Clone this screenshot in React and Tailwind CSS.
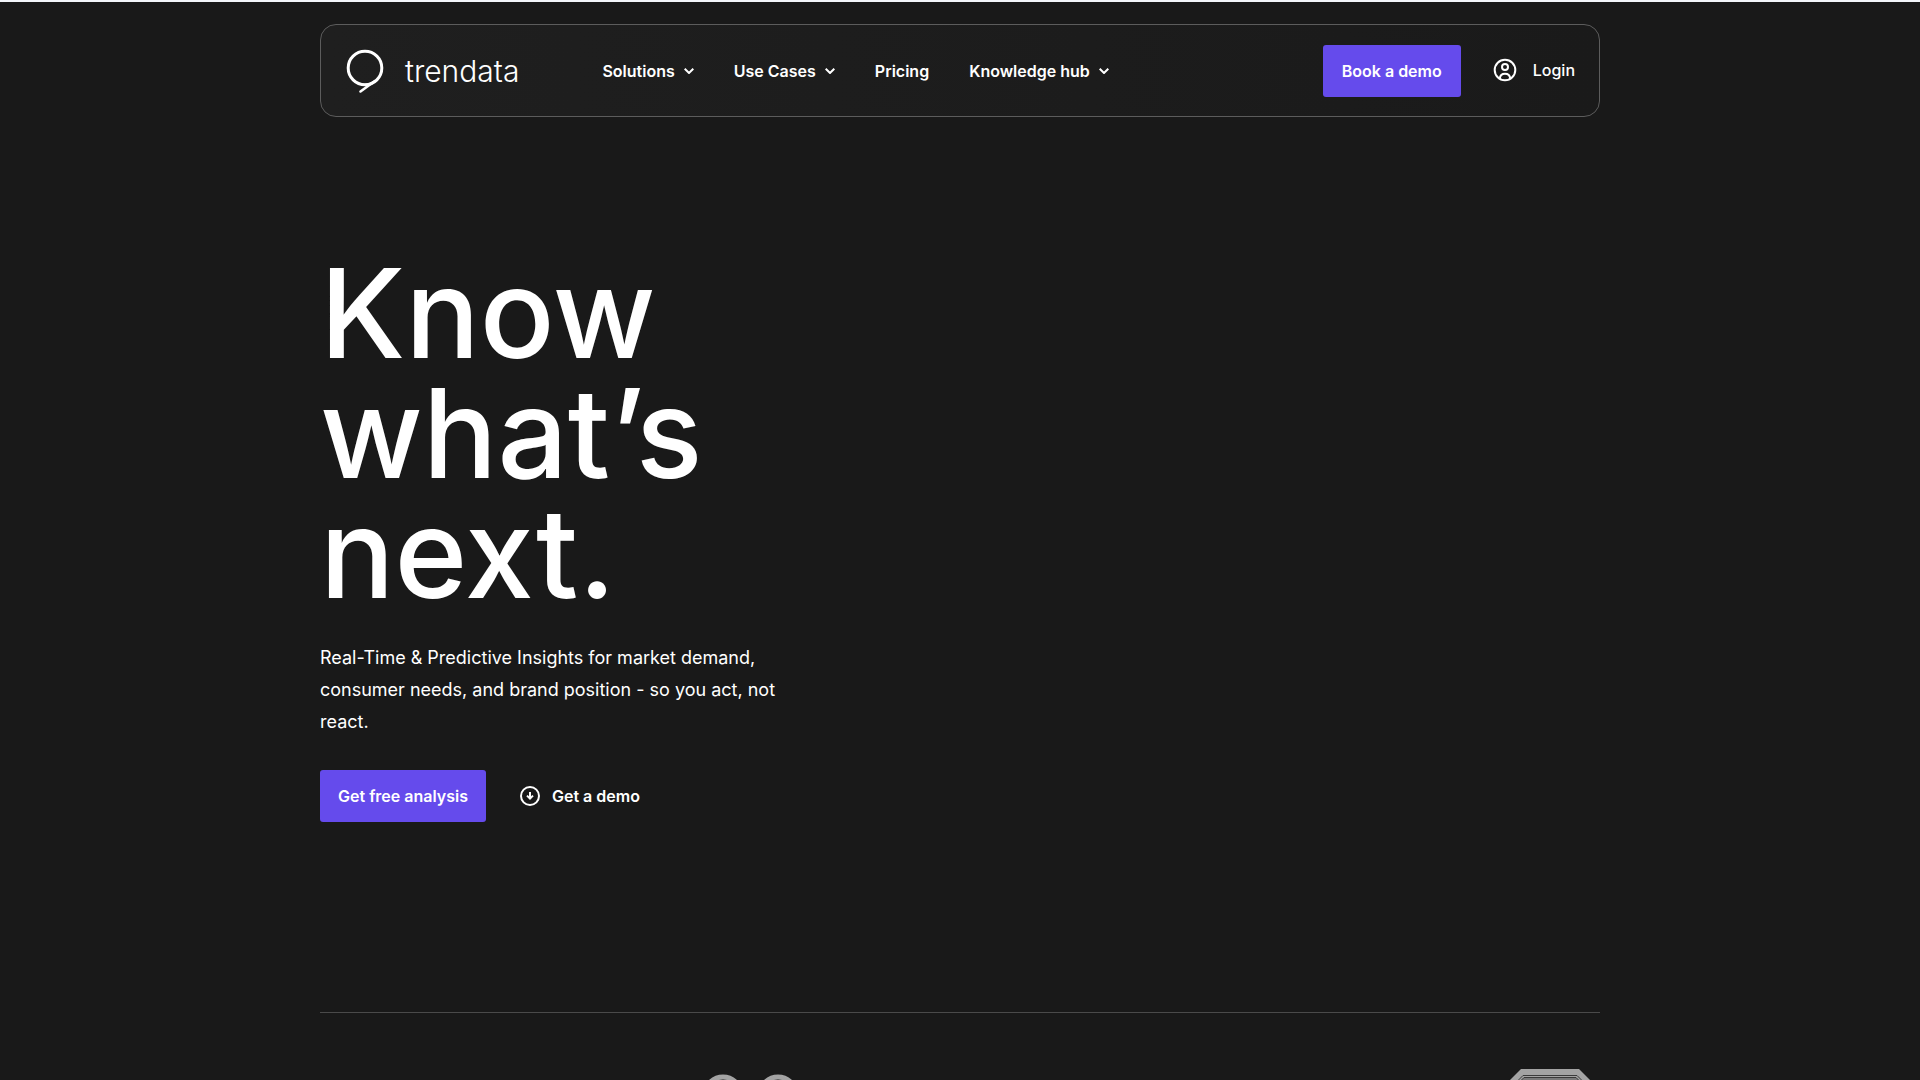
import React from 'react';

const menu = [
  { label: 'Solutions', dropdown: true },
  { label: 'Use Cases', dropdown: true },
  { label: 'Pricing', dropdown: false },
  { label: 'Knowledge hub', dropdown: true },
];

function Logo() {
  return (
    <a href="#home" className="flex items-center gap-5">
      <svg width="40" height="46" viewBox="0 0 40 46" fill="none" stroke="currentColor" strokeLinecap="round" strokeLinejoin="round">
        <circle cx="20" cy="20" r="16.8" strokeWidth="3" />
        <path d="M29.5 33.2 L15.5 43.5" strokeWidth="2.6" />
        <path d="M18 36.8 L24.5 36.6" strokeWidth="2" />
      </svg>
      <span className="text-3xl leading-8 font-light">trendata</span>
    </a>
  );
}

function Chevron() {
  return (
    <svg width="10" height="6" viewBox="0 0 10 6" fill="none" stroke="currentColor" strokeWidth="2">
      <path d="M0.7 0.7 L5 5 L9.3 0.7" />
    </svg>
  );
}

function UserIcon() {
  return (
    <svg width="24" height="24" viewBox="0 0 24 24" fill="none" stroke="currentColor" strokeWidth="2">
      <circle cx="12" cy="12" r="10.3" />
      <circle cx="12" cy="9" r="3" />
      <path d="M6.8 20.6 C7 17.6 9 15.8 12 15.8 C15 15.8 17 17.6 17.2 20.6" />
    </svg>
  );
}

function DownCircle() {
  return (
    <svg width="20" height="20" viewBox="0 0 20 20" fill="none" stroke="currentColor" strokeWidth="2">
      <circle cx="10" cy="10" r="9" />
      <path d="M10 6 V12" />
      <path d="M7 9.6 L10 12.6 L13 9.6" />
    </svg>
  );
}

function Header() {
  return (
    <header className="flex h-[93px] items-center rounded-2xl border border-[#5c5c5c] bg-linear-to-r from-[#1f1f1f] to-[#1a1a1a] px-6">
      <Logo />
      <nav className="ml-[83px] flex items-center gap-10">
        {menu.map((item) =>
          item.dropdown ? (
            <button key={item.label} type="button" className="flex cursor-pointer items-center gap-[9px] text-base font-semibold">
              {item.label}
              <Chevron />
            </button>
          ) : (
            <a key={item.label} href="#pricing" className="text-base font-semibold">
              {item.label}
            </a>
          )
        )}
      </nav>
      <div className="ml-auto flex items-center gap-8">
        <button type="button" className="h-[52px] cursor-pointer rounded-[3px] bg-[#654bec] px-[19px] text-base font-semibold">
          Book a demo
        </button>
        <a href="#login" className="flex items-center gap-4 pb-[2px] text-base font-medium">
          <UserIcon />
          Login
        </a>
      </div>
    </header>
  );
}

function Hero() {
  return (
    <section className="pt-[136px]">
      <div className="max-w-[480px]">
        <h1 className="text-[124px] leading-[120px] font-medium">
          Know what’s next.
        </h1>
        <p className="mt-[29px] text-lg leading-8">
          Real-Time &amp; Predictive Insights for market demand, consumer needs, and brand position - so you act, not react.
        </p>
      </div>
      <div className="mt-8 flex items-center gap-[34px]">
        <button type="button" className="h-[52px] cursor-pointer rounded-[3px] bg-[#654bec] px-[18px] text-base font-semibold">
          Get free analysis
        </button>
        <a href="#demo" className="flex items-center gap-3 text-base font-semibold">
          <DownCircle />
          Get a demo
        </a>
      </div>
    </section>
  );
}

function ClientLogos() {
  return (
    <section className="mt-[190px] flex justify-between border-t border-[#4a4a4a] pt-14">
      <svg width="100" height="80" viewBox="0 0 100 80" fill="none" stroke="#a3a3a3" strokeWidth="5" className="ml-[380px]">
        <ellipse cx="23" cy="24" rx="17" ry="16" />
        <ellipse cx="78" cy="24" rx="17" ry="16" />
      </svg>
      <svg width="84" height="84" viewBox="0 0 84 84" className="mr-2">
        <path d="M13 0 H71 L84 13 V70 L70 84 H12 L0 72 V13 Z" fill="#a3a3a3" />
        <path d="M15 6.5 H69 L79 16.5 V68 L69 78 H15 L5 68 V16.5 Z" fill="#a3a3a3" stroke="#3a3a3a" />
        <path d="M16 8.5 H68 L77 17.5 V67 L68 76 H16 L7 67 V17.5 Z" fill="#7a7a7a" stroke="#3a3a3a" />
      </svg>
    </section>
  );
}

export default function App() {
  return (
    <div className="h-screen overflow-hidden border-t-2 border-[#f3f6fa] bg-[#191919] font-[Inter,sans-serif] text-white">
      <div className="mx-auto max-w-[1280px] pt-[22px]">
        <Header />
        <Hero />
        <ClientLogos />
      </div>
    </div>
  );
}
